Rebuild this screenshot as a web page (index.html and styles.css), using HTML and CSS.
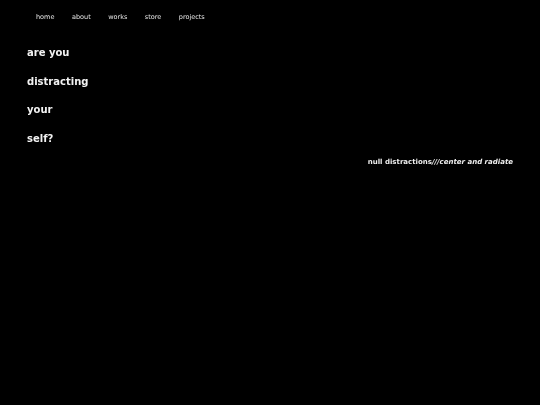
FILE: index.html
```html
<!DOCTYPE html>
<html>
<head>
<meta charset="utf-8">
<link rel="stylesheet" href="styles.css">
</head>
<body>
<nav class="nav">
  <a class="nav-link" href="#">home</a>
  <a class="nav-link" href="#">about</a>
  <a class="nav-link" href="#">works</a>
  <a class="nav-link" href="#">store</a>
  <a class="nav-link" href="#">projects</a>
</nav>
<main class="content">
  <div class="question">
    <p class="line">are you</p>
    <p class="line">distracting</p>
    <p class="line">your</p>
    <p class="line">self?</p>
  </div>
  <p class="tagline">null distractions<span class="slashes">///</span><em class="tag-em">center and radiate</em></p>
</main>
</body>
</html>
```
FILE: styles.css
```css
html, body {
  margin: 0;
  padding: 0;
  background: #000;
}
body {
  font-family: "DejaVu Sans", Verdana, sans-serif;
  color: #eee;
  width: 540px;
  height: 405px;
}
.nav {
  display: flex;
  gap: 17.5px;
  padding: 12px 0 0 36px;
  height: 10px;
  will-change: transform;
}
.nav-link {
  font-size: 6.5px;
  line-height: 10px;
  color: #e6e6e6;
  text-decoration: none;
}
.content {
  padding: 17px 27px 0 27px;
  will-change: transform;
}
.question {
  display: flex;
  flex-direction: column;
}
.line {
  margin: 0;
  font-size: 10px;
  font-weight: bold;
  line-height: 28.5px;
  color: #f2f2f2;
}
.tagline {
  margin: 4px 0 0 0;
  text-align: right;
  font-size: 7px;
  line-height: 10px;
  font-weight: bold;
  color: #eee;
}
.slashes {
  font-style: italic;
}
.tag-em {
  font-style: italic;
}
```
